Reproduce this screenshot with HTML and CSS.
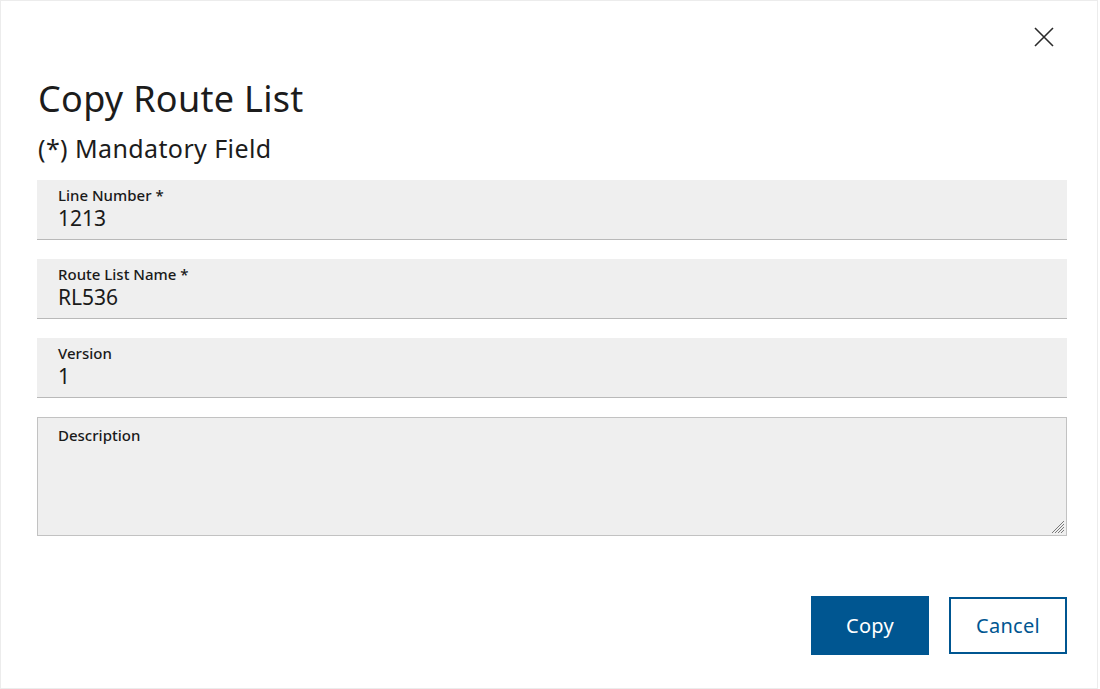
FILE: index.html
```html
<!DOCTYPE html>
<html>
<head>
<meta charset="utf-8">
<link rel="stylesheet" href="styles.css">
</head>
<body>
<div class="dialog">
  <div class="top">
    <button class="close" aria-label="Close">
      <svg width="22" height="22" viewBox="0 0 22 22"><path d="M2 2 L20 20 M20 2 L2 20" stroke="#2b2b2b" stroke-width="1.6" fill="none"/></svg>
    </button>
  </div>
  <h1 class="title">Copy Route List</h1>
  <div class="subtitle">(*) Mandatory Field</div>
  <div class="fields">
    <div class="field">
      <label class="label">Line Number *</label>
      <div class="value">1213</div>
    </div>
    <div class="field">
      <label class="label">Route List Name *</label>
      <div class="value">RL536</div>
    </div>
    <div class="field">
      <label class="label">Version</label>
      <div class="value">1</div>
    </div>
    <div class="area">
      <label class="label area-label">Description</label>
      <textarea class="textarea"></textarea>
      <svg class="grip" width="14" height="14" viewBox="0 0 14 14"><path d="M13 1 L1 13 M13 4 L4 13 M13 7 L7 13 M13 10 L10 13" stroke="#7a7a7a" stroke-width="1" fill="none"/></svg>
    </div>
  </div>
  <div class="actions">
    <button class="btn primary">Copy</button>
    <button class="btn secondary">Cancel</button>
  </div>
</div>
</body>
</html>
```

FILE: styles.css
```css
* { box-sizing: border-box; }
html, body { margin: 0; padding: 0; background: #fff; }
body { font-family: "Noto Sans", "Open Sans", sans-serif; color: #1c1c1c; }

.dialog {
  width: 1098px;
  height: 689px;
  border: 1px solid #ececec;
  padding: 0 30px 0 36px;
  display: flex;
  flex-direction: column;
}

.top {
  display: flex;
  justify-content: flex-end;
  padding-top: 25px;
}
.close {
  background: none;
  border: 0;
  padding: 0;
  width: 22px;
  height: 22px;
  margin-right: 12px;
  cursor: pointer;
}
.close svg { display: block; }

.title {
  margin: 31px 0 0 1px;
  font-size: 36px;
  font-weight: 400;
  line-height: 40px;
  letter-spacing: 0.3px;
}
.subtitle {
  margin: 14px 0 0 1px;
  font-size: 25px;
  line-height: 30px;
  letter-spacing: 0.4px;
}

.fields {
  margin-top: 17px;
  display: flex;
  flex-direction: column;
  gap: 19px;
}
.field {
  height: 60px;
  background: #efefef;
  border-bottom: 1px solid #b9b9b9;
  padding: 5px 21px 0;
}
.label {
  display: block;
  font-size: 15px;
  font-weight: 500;
  line-height: 20px;
  color: #1a1a1a;
}
.value {
  font-size: 21px;
  line-height: 24px;
  margin-top: 1px;
  color: #1a1a1a;
}

.area { position: relative; }
.area-label {
  position: absolute;
  left: 21px;
  top: 8px;
}
.textarea {
  display: block;
  width: 100%;
  height: 119px;
  background: #efefef;
  border: 1px solid #c2c2c2;
  border-radius: 0;
  resize: none;
  margin: 0;
  padding: 30px 20px 8px;
  font-family: inherit;
  font-size: 16px;
  outline: none;
}
.grip {
  position: absolute;
  right: 2px;
  bottom: 2px;
  pointer-events: none;
}

.actions {
  margin-top: 60px;
  display: flex;
  justify-content: flex-end;
  gap: 20px;
}
.btn {
  width: 118px;
  height: 59px;
  font-family: inherit;
  font-size: 20px;
  letter-spacing: 0.3px;
  cursor: pointer;
  border-radius: 0;
}
.primary {
  background: #005691;
  color: #fff;
  border: 0;
}
.secondary {
  background: #fff;
  color: #005691;
  border: 2px solid #005691;
  height: 57px;
  margin-top: 1px;
}
```
